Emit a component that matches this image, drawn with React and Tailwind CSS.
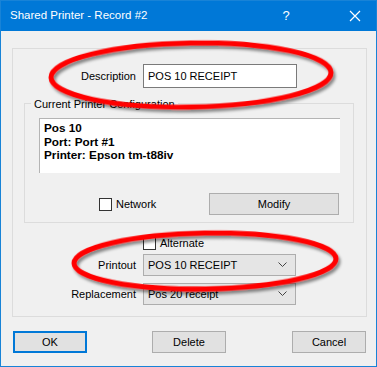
import React from 'react'

const font = { fontFamily: '"Liberation Sans", Arial, sans-serif' }

function Checkbox({ label }) {
  return (
    <label className="flex items-center gap-[4px] text-[11px] leading-[13px] text-black">
      <span className="w-[13px] h-[13px] border border-[#333333] bg-white" />
      {label}
    </label>
  )
}

function Select({ value }) {
  return (
    <div className="w-[153px] h-[22px] border border-[#adadad] bg-[#e5e5e5] flex items-center justify-between pl-[4px] pr-[8px] text-[11px] text-black">
      <span>{value}</span>
      <svg width="9" height="6" viewBox="0 0 9 6">
        <path d="M0.5 0.5 L4.5 4.5 L8.5 0.5" fill="none" stroke="#444" strokeWidth="1" />
      </svg>
    </div>
  )
}

function Button({ children, primary = false, className = '' }) {
  return (
    <button
      type="button"
      className={
        'h-[22px] bg-[#e1e1e1] text-[11px] text-black flex items-center justify-center ' +
        (primary ? 'border-2 border-[#0078d7] ' : 'border border-[#adadad] ') +
        className
      }
    >
      {children}
    </button>
  )
}

export default function App() {
  return (
    <div className="relative w-[377px] h-[367px] border border-[#1883d7] bg-[#f0f0f0] flex flex-col" style={font}>
      {/* barra de titulo */}
      <div className="h-[30px] bg-[#0078d7] flex items-center text-white">
        <span className="pl-[9px] text-[11.5px]">Shared Printer - Record #2</span>
        <span className="ml-auto w-[20px] text-center text-[13px] mr-[53px]">?</span>
        <svg width="12" height="12" viewBox="0 0 12 12" className="mr-[15px]">
          <path d="M1 1 L11 11 M11 1 L1 11" stroke="white" strokeWidth="1.2" />
        </svg>
      </div>

      {/* caja principal */}
      <div className="ml-[11px] mt-[17px] w-[355px] h-[269px] border border-[#dcdcdc] flex flex-col">
        <div className="mt-[15px] flex items-center">
          <span className="w-[123px] text-right text-[11px] text-black">Description</span>
          <div className="ml-[7px] w-[154px] h-[24px] border border-[#7a7a7a] bg-white flex items-center pl-[4px] text-[11px] text-black">
            POS 10 RECEIPT
          </div>
        </div>

        {/* configuracion actual */}
        <div className="relative ml-[11px] mt-[15px] w-[330px] h-[120px] border border-[#dcdcdc] flex flex-col">
          <span className="absolute left-[6px] top-[-8px] px-[3px] bg-[#f0f0f0] text-[11px] text-black">
            Current Printer Configuration
          </span>
          <div className="ml-[14px] mt-[14px] w-[301px] h-[55px] bg-white border-l border-t border-[#b4b4b4] pl-[4px] pt-[2px] text-[11.75px] font-bold leading-[13.5px] text-black">
            <div>Pos 10</div>
            <div>Port: Port #1</div>
            <div>Printer: Epson tm-t88iv</div>
          </div>
          <div className="mt-[20px] flex items-center">
            <div className="ml-[74px]">
              <Checkbox label="Network" />
            </div>
            <Button className="ml-auto mr-[14px] w-[130px] h-[21px]">Modify</Button>
          </div>
        </div>

        <div className="ml-[130px] mt-[14px]">
          <Checkbox label="Alternate" />
        </div>
        <div className="mt-[4px] flex items-center">
          <span className="w-[123px] text-right text-[11px] text-black">Printout</span>
          <div className="ml-[7px]">
            <Select value="POS 10 RECEIPT" />
          </div>
        </div>
        <div className="mt-[7px] flex items-center">
          <span className="w-[123px] text-right text-[11px] text-black">Replacement</span>
          <div className="ml-[7px]">
            <Select value="Pos 20 receipt" />
          </div>
        </div>
      </div>

      {/* botones */}
      <div className="mt-[14px] ml-[12px] flex">
        <Button primary className="w-[74px]">OK</Button>
        <Button className="ml-[65px] w-[74px]">Delete</Button>
        <Button className="ml-[66px] w-[74px]">Cancel</Button>
      </div>

      {/* marcas rojas */}
      <svg className="absolute left-[-1px] top-[-1px] pointer-events-none" width="377" height="367" viewBox="0 0 377 367">
        <defs>
          <filter id="sh" x="-10%" y="-30%" width="120%" height="160%">
            <feDropShadow dx="2" dy="3" stdDeviation="1.5" floodColor="#000" floodOpacity="0.45" />
          </filter>
        </defs>
        <ellipse cx="191" cy="75" rx="140" ry="32" fill="none" stroke="#ff0000" strokeWidth="5" filter="url(#sh)" transform="rotate(-1 191 75)" />
        <ellipse cx="205" cy="261" rx="131" ry="28" fill="none" stroke="#ff0000" strokeWidth="5" filter="url(#sh)" transform="rotate(-1 205 261)" />
      </svg>
    </div>
  )
}
